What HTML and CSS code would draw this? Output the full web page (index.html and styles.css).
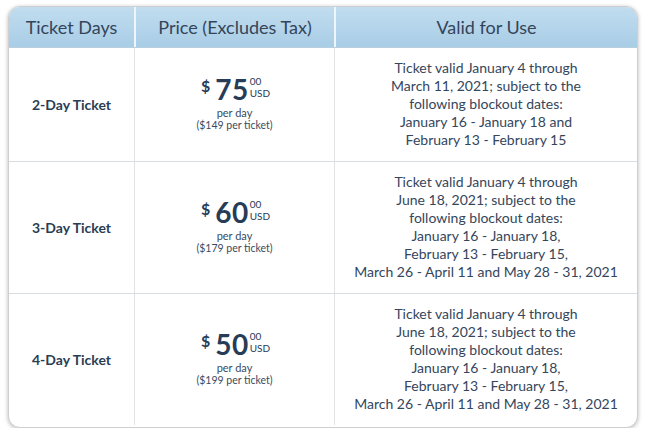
FILE: index.html
```html
<!DOCTYPE html>
<html>
<head>
<meta charset="utf-8">
<link rel="stylesheet" href="styles.css">
</head>
<body>
<div class="card">
  <div class="row head">
    <div class="cell hcell">Ticket Days</div>
    <div class="cell hcell">Price (Excludes Tax)</div>
    <div class="cell hcell">Valid for Use</div>
  </div>
  <div class="row">
    <div class="cell label">2-Day Ticket</div>
    <div class="cell price">
      <div class="amount"><span class="cur">$</span><span class="big">75</span><span class="small"><span class="cents">00</span><span class="usd">USD</span></span></div>
      <div class="per">per day</div>
      <div class="tot">($149 per ticket)</div>
    </div>
    <div class="cell valid">Ticket valid January 4 through<br>March 11, 2021; subject to the<br>following blockout dates:<br>January 16 - January 18 and<br>February 13 - February 15</div>
  </div>
  <div class="row">
    <div class="cell label">3-Day Ticket</div>
    <div class="cell price">
      <div class="amount"><span class="cur">$</span><span class="big">60</span><span class="small"><span class="cents">00</span><span class="usd">USD</span></span></div>
      <div class="per">per day</div>
      <div class="tot">($179 per ticket)</div>
    </div>
    <div class="cell valid">Ticket valid January 4 through<br>June 18, 2021; subject to the<br>following blockout dates:<br>January 16 - January 18,<br>February 13 - February 15,<br>March 26 - April 11 and May 28 - 31, 2021</div>
  </div>
  <div class="row last">
    <div class="cell label">4-Day Ticket</div>
    <div class="cell price">
      <div class="amount"><span class="cur">$</span><span class="big">50</span><span class="small"><span class="cents">00</span><span class="usd">USD</span></span></div>
      <div class="per">per day</div>
      <div class="tot">($199 per ticket)</div>
    </div>
    <div class="cell valid">Ticket valid January 4 through<br>June 18, 2021; subject to the<br>following blockout dates:<br>January 16 - January 18,<br>February 13 - February 15,<br>March 26 - April 11 and May 28 - 31, 2021</div>
  </div>
</div>
</body>
</html>
```
FILE: styles.css
```css
* { box-sizing: border-box; }
html, body { margin: 0; padding: 0; background: #fff; }
body {
  font-family: Lato, "Noto Sans", sans-serif;
  color: #273c57;
  padding: 6px 8px 0 8px;
}
.card {
  width: 630px;
  height: 422px;
  border: 1px solid #cfcfcf;
  border-radius: 12px;
  overflow: hidden;
  box-shadow: 0 1px 4px rgba(0,0,0,0.28);
  background: #fff;
}
.row {
  display: grid;
  grid-template-columns: 125px 200px 1fr;
  border-bottom: 1px solid #d6dde4;
}
.row.last { border-bottom: none; }
.head {
  height: 41px;
  background: linear-gradient(#c1ddef, #a8cde6);
  border-bottom: 1px solid #b9cfdd;
}
.cell {
  display: flex;
  align-items: center;
  justify-content: center;
  text-align: center;
  border-left: 1px solid #e2e2e2;
}
.cell:first-child { border-left: none; }
.hcell {
  font-size: 18px;
  color: #34455a;
  border-left: 2px solid #eef6fb;
}
.label {
  font-size: 14px;
  font-weight: 700;
  color: #2a3d55;
}
.price {
  flex-direction: column;
  padding-bottom: 5px;
}
.amount {
  display: flex;
  align-items: flex-start;
  margin-left: 2px;
}
.cur {
  font-size: 16px;
  line-height: 20px;
  font-weight: 700;
  margin-top: 4px;
  margin-right: 5px;
}
.big {
  font-size: 28px;
  line-height: 34px;
  font-weight: 700;
  letter-spacing: 0.5px;
}
.small {
  display: flex;
  flex-direction: column;
  align-items: flex-start;
  margin-left: 1px;
  margin-top: 3px;
}
.cents { font-size: 10px; line-height: 12px; height: 12px; }
.usd { font-size: 10px; line-height: 12px; }
.per {
  font-size: 11px;
  line-height: 13px;
  color: #3a4b60;
}
.tot {
  font-size: 10.5px;
  line-height: 13px;
  color: #3a4b60;
}
.valid {
  font-size: 14px;
  line-height: 18px;
  padding: 11px 4px 12px;
  color: #34465c;
}
```
